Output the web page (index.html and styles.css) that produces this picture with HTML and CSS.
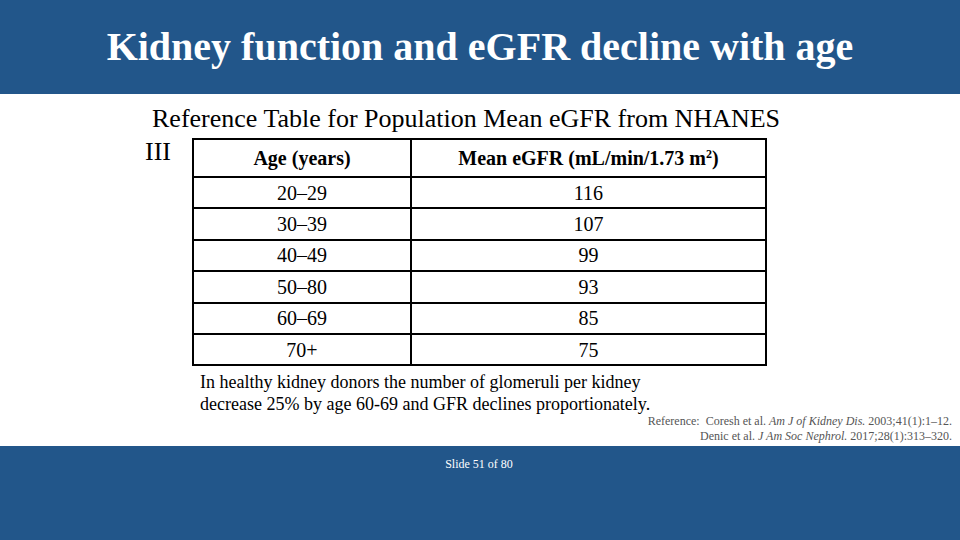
FILE: index.html
```html
<!DOCTYPE html>
<html lang="en">
<head>
<meta charset="utf-8">
<title>Kidney function and eGFR decline with age</title>
<link rel="stylesheet" href="styles.css">
</head>
<body>
<div class="slide">
  <header class="band band-top">
    <h1 class="title">Kidney function and eGFR decline with age</h1>
  </header>
  <main class="content">
    <p class="lead">Reference Table for Population Mean eGFR from NHANES</p>
    <div class="table-row">
      <span class="lead-tail">III</span>
      <table class="gfr">
        <thead>
          <tr><th class="c1">Age (years)</th><th class="c2">Mean eGFR (mL/min/1.73 m<sup>2</sup>)</th></tr>
        </thead>
        <tbody>
          <tr><td>20–29</td><td>116</td></tr>
          <tr><td>30–39</td><td>107</td></tr>
          <tr><td>40–49</td><td>99</td></tr>
          <tr><td>50–80</td><td>93</td></tr>
          <tr><td>60–69</td><td>85</td></tr>
          <tr><td>70+</td><td>75</td></tr>
        </tbody>
      </table>
    </div>
    <p class="note">In healthy kidney donors the number of glomeruli per kidney<br>decrease 25% by age 60-69 and GFR declines proportionately.</p>
    <div class="refs">
      <div>Reference:&nbsp; Coresh et al. <i>Am J of Kidney Dis.</i> 2003;41(1):1–12.</div>
      <div>Denic et al. <i>J Am Soc Nephrol.</i> 2017;28(1):313–320.</div>
    </div>
  </main>
  <footer class="band band-bottom">
    <span class="counter">Slide 51 of 80</span>
  </footer>
</div>
</body>
</html>
```

FILE: styles.css
```css
html, body {
  margin: 0;
  padding: 0;
  background: #ffffff;
}
body {
  font-family: "Times New Roman", "Liberation Serif", Tinos, Times, serif;
  color: #000;
}
.slide {
  width: 960px;
  height: 540px;
  display: flex;
  flex-direction: column;
  overflow: hidden;
}
.band {
  background: #22568a;
  color: #fff;
}
.band-top {
  height: 94px;
  display: flex;
  align-items: center;
  justify-content: center;
}
.title {
  margin: 0;
  font-family: "Times New Roman", "Liberation Serif", serif;
  font-size: 40px;
  font-weight: bold;
  line-height: normal;
  padding-bottom: 1px;
}
.content {
  height: 352px;
  display: flex;
  flex-direction: column;
}
.lead {
  margin: 8px 0 0 152px;
  font-size: 26px;
  line-height: 33px;
}
.table-row {
  display: flex;
  align-items: flex-start;
  padding-left: 145px;
}
.lead-tail {
  width: 47px;
  font-size: 26px;
  line-height: 33px;
}
.gfr {
  margin-top: 3px;
  width: 575px;
  border-collapse: collapse;
  font-size: 20px;
}
.gfr th, .gfr td {
  border: 2px solid #000;
  padding: 0;
  text-align: center;
  vertical-align: middle;
}
.gfr th {
  height: 36px;
  font-weight: bold;
  line-height: 24px;
}
.gfr .c1 {
  width: 216px;
}
.gfr td {
  height: 29.4px;
  line-height: 22px;
}
.gfr sup {
  font-size: 12px;
  line-height: 0;
  vertical-align: 7px;
}
.note {
  margin: 5px 0 0 200px;
  font-size: 18px;
  line-height: 22px;
}
.refs {
  margin-top: -1px;
  padding-right: 8px;
  text-align: right;
  font-size: 12px;
  line-height: 15px;
  color: #555;
}
.band-bottom {
  flex: 1;
  display: flex;
  justify-content: center;
  padding-top: 11px;
  box-sizing: border-box;
}
.counter {
  font-size: 12px;
  line-height: 15px;
  padding-right: 2px;
}
```
